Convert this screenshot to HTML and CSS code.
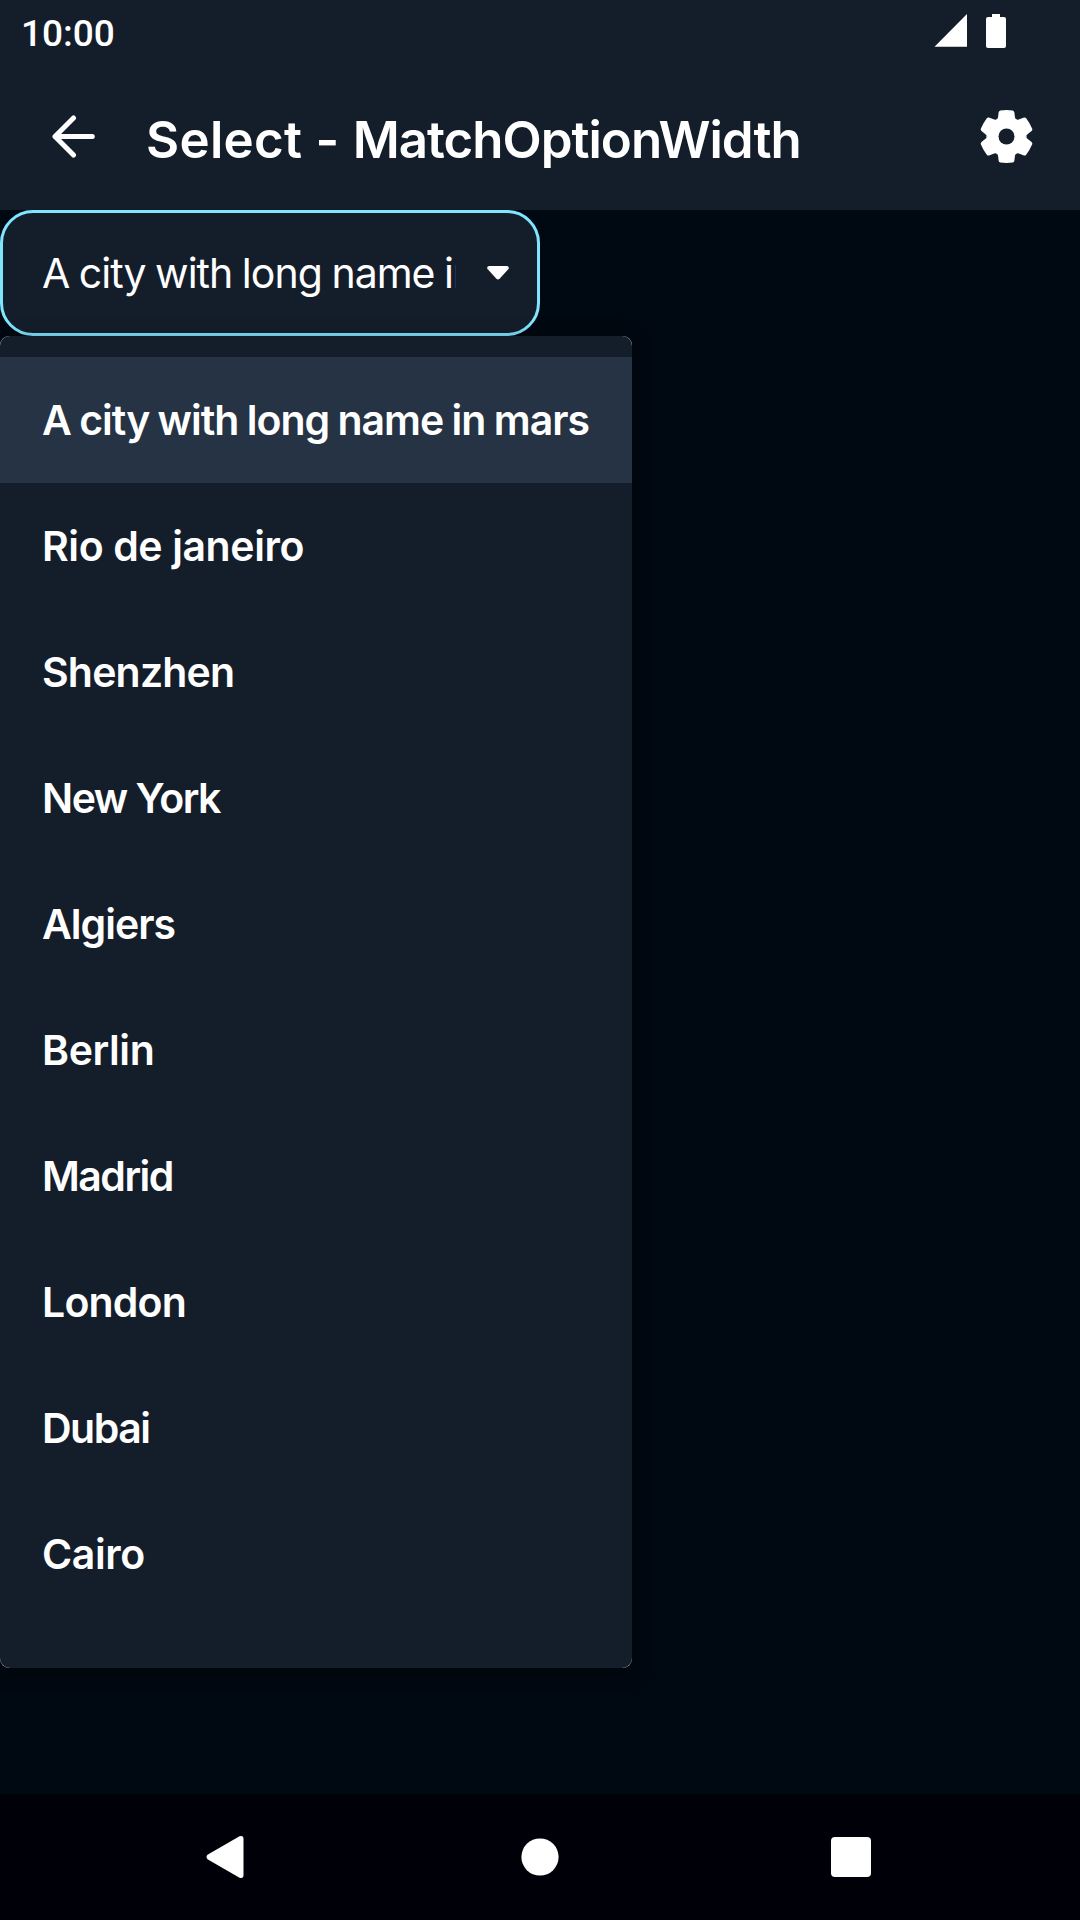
FILE: index.html
```html
<!DOCTYPE html>
<html lang="en">
<head>
<meta charset="utf-8">
<title>Select - MatchOptionWidth</title>
<link rel="stylesheet" href="styles.css">
</head>
<body>
<div class="screen">
  <div class="status">
    <span class="clock">10:00</span>
    <svg class="status-icons" width="74" height="36" viewBox="0 0 74 36" fill="#fff">
      <path d="M.500 33.800 33 1V33.800Z"/>
      <path d="M58 1h8v3h4a2 2 0 0 1 2 2v27a2 2 0 0 1-2 2H54a2 2 0 0 1-2-2V6a2 2 0 0 1 2-2h4Z"/>
    </svg>
  </div>
  <header class="appbar">
    <svg class="back" width="44" height="43" viewBox="0 .5 44 43" fill="none" stroke="#fff" stroke-width="5" stroke-linecap="round" stroke-linejoin="round">
      <path d="M22.500 3.500 4 22 22.500 40.500M4 22H41.300"/>
    </svg>
    <h1 class="title"><span class="title-lead">Select - </span>MatchOptionWidth</h1>
    <svg class="gear" width="53" height="53" viewBox="-26.500 -26.500 53 53" fill="#fff">
      <defs><path id="tooth" d="M0 0-10.300-17.800C-8.900-16.900-8.600-18.500-8.300-20.500L-7.900-24Q-7.600-25.900-6.200-26.100 0-26.900 6.200-26.100 7.600-25.900 7.900-24L8.300-20.500C8.600-18.500 8.900-16.900 10.300-17.800Z"/></defs>
      <circle r="19"/>
      <use href="#tooth"/>
      <use href="#tooth" transform="rotate(60)"/>
      <use href="#tooth" transform="rotate(120)"/>
      <use href="#tooth" transform="rotate(180)"/>
      <use href="#tooth" transform="rotate(240)"/>
      <use href="#tooth" transform="rotate(300)"/>
      <circle r="8" fill="#141e2b"/>
    </svg>
  </header>
  <main class="content">
    <div class="select">
      <span class="value">A city with long name in mars</span>
      <svg class="caret" width="22" height="14" viewBox="0 0 22 14" fill="#fff"><path d="M2.200 0H19.800C21.800 0 22.500 2.200 21 3.600L12.600 12.700Q11 14.300 9.400 12.700L1 3.600C-.5 2.200.2 0 2.200 0Z"/></svg>
    </div>
    <div class="menu">
      <ul class="options">
        <li class="option selected">A city with long name in mars</li>
        <li class="option loose">Rio de janeiro</li>
        <li class="option">Shenzhen</li>
        <li class="option tight">New York</li>
        <li class="option snug">Algiers</li>
        <li class="option loose">Berlin</li>
        <li class="option tight">Madrid</li>
        <li class="option">London</li>
        <li class="option tight">Dubai</li>
        <li class="option loose">Cairo</li>
      </ul>
    </div>
  </main>
  <nav class="navbar">
    <svg width="38" height="44" viewBox="0 0 38 44" fill="#fff"><path d="M1.500 19.800 33.500 1.300Q37.500 0 37.500 4V40Q37.500 44 33.500 42.700L1.500 24.200Q-.5 22 1.500 19.800Z"/></svg>
    <svg class="home" width="38" height="38" viewBox="0 0 38 38" fill="#fff"><circle cx="19" cy="19" r="18.600"/></svg>
    <svg width="40" height="40" viewBox="0 0 40 40" fill="#fff"><rect width="40" height="40" rx="4"/></svg>
  </nav>
</div>
</body>
</html>
```
FILE: styles.css
```css
* { box-sizing: border-box; }

body {
  margin: 0;
  background: #000811;
  color: #fff;
  font-family: Inter, "Liberation Sans", sans-serif;
}

.screen {
  display: flex;
  flex-direction: column;
  width: 1080px;
  height: 1920px;
  overflow: hidden;
}

.status {
  display: flex;
  justify-content: space-between;
  align-items: flex-start;
  height: 63px;
  padding: 13px 72px 0 21px;
  background: #141e2b;
}

.clock {
  margin-top: 1px;
  font: 500 37px/40px Roboto, sans-serif;
}

.appbar {
  display: flex;
  align-items: center;
  height: 147px;
  padding: 0 47px 0 51px;
  background: #141e2b;
}

.title {
  flex: 1;
  margin: 6px 0 0 51px;
  font-size: 51px;
  line-height: 60px;
  font-weight: 600;
  letter-spacing: -1px;
  white-space: nowrap;
}

.title-lead {
  letter-spacing: 0.3px;
}

.content {
  flex: 1;
}

.select {
  display: flex;
  align-items: center;
  justify-content: space-between;
  width: 540px;
  height: 126px;
  padding: 0 28px 0 39px;
  border: 3px solid #80e5ff;
  border-radius: 33px;
  background: #141e2b;
}

.value {
  width: 414px;
  overflow: hidden;
  font-size: 41px;
  line-height: 60px;
  letter-spacing: -0.98px;
  word-spacing: -1px;
  white-space: nowrap;
}

.caret {
  margin-bottom: 1px;
}

.menu {
  width: 632px;
  height: 1332px;
  border-radius: 9px;
  background: #a4a8ad;
  box-shadow: 0 4px 20px rgba(0, 0, 0, 0.4);
}

.options {
  height: 100%;
  margin: 0;
  padding: 21px 0;
  border-radius: 10px;
  background: #141e2b;
  list-style: none;
}

.option {
  height: 126px;
  padding: 0 42px;
  font-size: 41px;
  line-height: 126px;
  font-weight: 600;
  letter-spacing: -0.8px;
  white-space: nowrap;
}

.option.selected {
  background: #253345;
  letter-spacing: -1px;
  word-spacing: -1px;
}

.option.loose { letter-spacing: -0.4px; }
.option.snug { letter-spacing: -1px; }
.option.tight { letter-spacing: -1.5px; }

.navbar {
  display: flex;
  align-items: center;
  justify-content: space-between;
  height: 126px;
  padding: 0 209px 0 206px;
  background: #000108;
}

.home {
  margin-left: 5px;
}
```
